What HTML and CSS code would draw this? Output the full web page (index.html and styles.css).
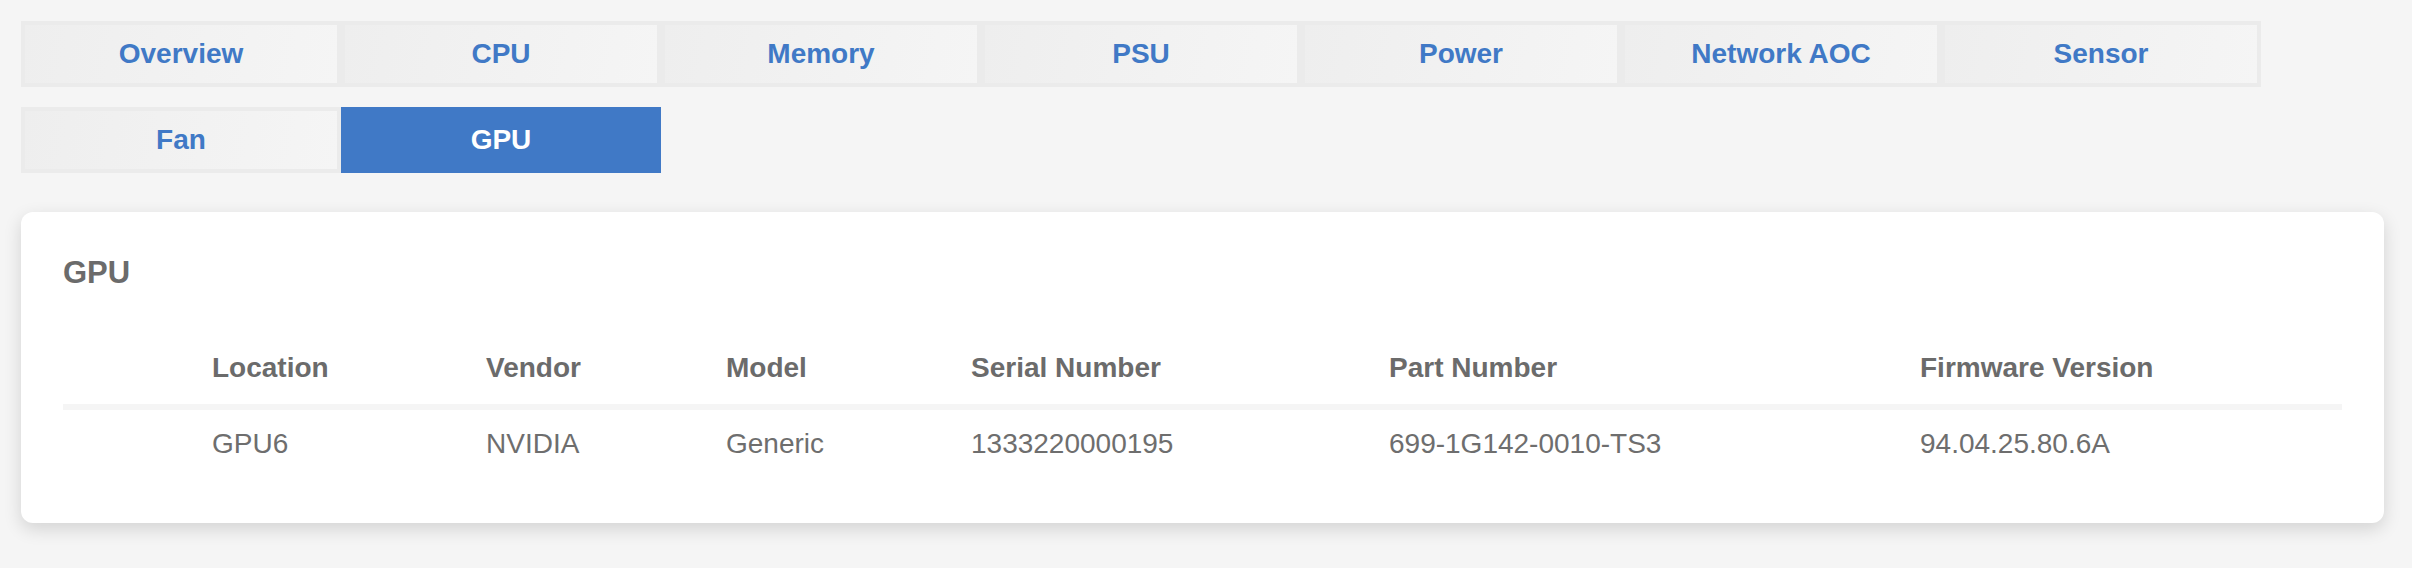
FILE: index.html
```html
<!DOCTYPE html>
<html lang="en">
<head>
  <meta charset="UTF-8">
  <title>Inventory - GPU</title>
  <link rel="stylesheet" href="styles.css">
</head>
<body>
  <nav class="tabs">
    <a class="tab">Overview</a>
    <a class="tab">CPU</a>
    <a class="tab">Memory</a>
    <a class="tab">PSU</a>
    <a class="tab">Power</a>
    <a class="tab">Network AOC</a>
    <a class="tab">Sensor</a>
    <a class="tab">Fan</a>
    <a class="tab active">GPU</a>
  </nav>

  <div class="card">
    <h2 class="card-title">GPU</h2>
    <table class="inventory-table">
      <thead>
        <tr>
          <th></th>
          <th>Location</th>
          <th>Vendor</th>
          <th>Model</th>
          <th>Serial Number</th>
          <th>Part Number</th>
          <th>Firmware Version</th>
        </tr>
      </thead>
      <tbody>
        <tr>
          <td></td>
          <td>GPU6</td>
          <td>NVIDIA</td>
          <td>Generic</td>
          <td>1333220000195</td>
          <td>699-1G142-0010-TS3</td>
          <td>94.04.25.80.6A</td>
        </tr>
      </tbody>
    </table>
  </div>
</body>
</html>
```

FILE: styles.css
```css
:root {
  --accent: #4079c6;
  --page-bg: #f5f5f5;
  --tab-border: #ebebeb;
  --text: #6b6b6b;
}

body {
  margin: 0;
  padding: 21px 28px 40px 21px;
  background-color: var(--page-bg);
  font-family: 'Liberation Sans', Arial, sans-serif;
  color: var(--text);
}

.tabs {
  display: flex;
  flex-wrap: wrap;
  row-gap: 20px;
}

.tab {
  box-sizing: border-box;
  width: 320px;
  height: 66px;
  display: flex;
  align-items: center;
  justify-content: center;
  border: 4px solid var(--tab-border);
  background: linear-gradient(100deg, #eeeeee, #f5f5f5);
  color: var(--accent);
  font-size: 28px;
  font-weight: bold;
  cursor: pointer;
}

.tab.active {
  background: var(--accent);
  border-color: var(--accent);
  color: #ffffff;
}

.card {
  margin-top: 39px;
  padding: 42px;
  background-color: #ffffff;
  border-radius: 12px;
  box-shadow: 0 6px 18px rgba(0, 0, 0, 0.14);
}

.card-title {
  margin: 0;
  font-size: 31px;
  line-height: 37px;
  font-weight: bold;
}

.inventory-table {
  width: 100%;
  margin-top: 41px;
  table-layout: fixed;
  border-collapse: separate;
  border-spacing: 0;
  font-size: 28px;
  line-height: 34px;
  text-align: left;
}

.inventory-table th {
  padding: 19px 0;
  border-bottom: 6px solid var(--page-bg);
  font-weight: bold;
}

.inventory-table td {
  padding: 17px 0 20px;
  color: #6e6e6e;
}

.inventory-table th:nth-child(1) { width: 149px; }
.inventory-table th:nth-child(2) { width: 274px; }
.inventory-table th:nth-child(3) { width: 240px; }
.inventory-table th:nth-child(4) { width: 245px; }
.inventory-table th:nth-child(5) { width: 418px; }
.inventory-table th:nth-child(6) { width: 531px; }
```
